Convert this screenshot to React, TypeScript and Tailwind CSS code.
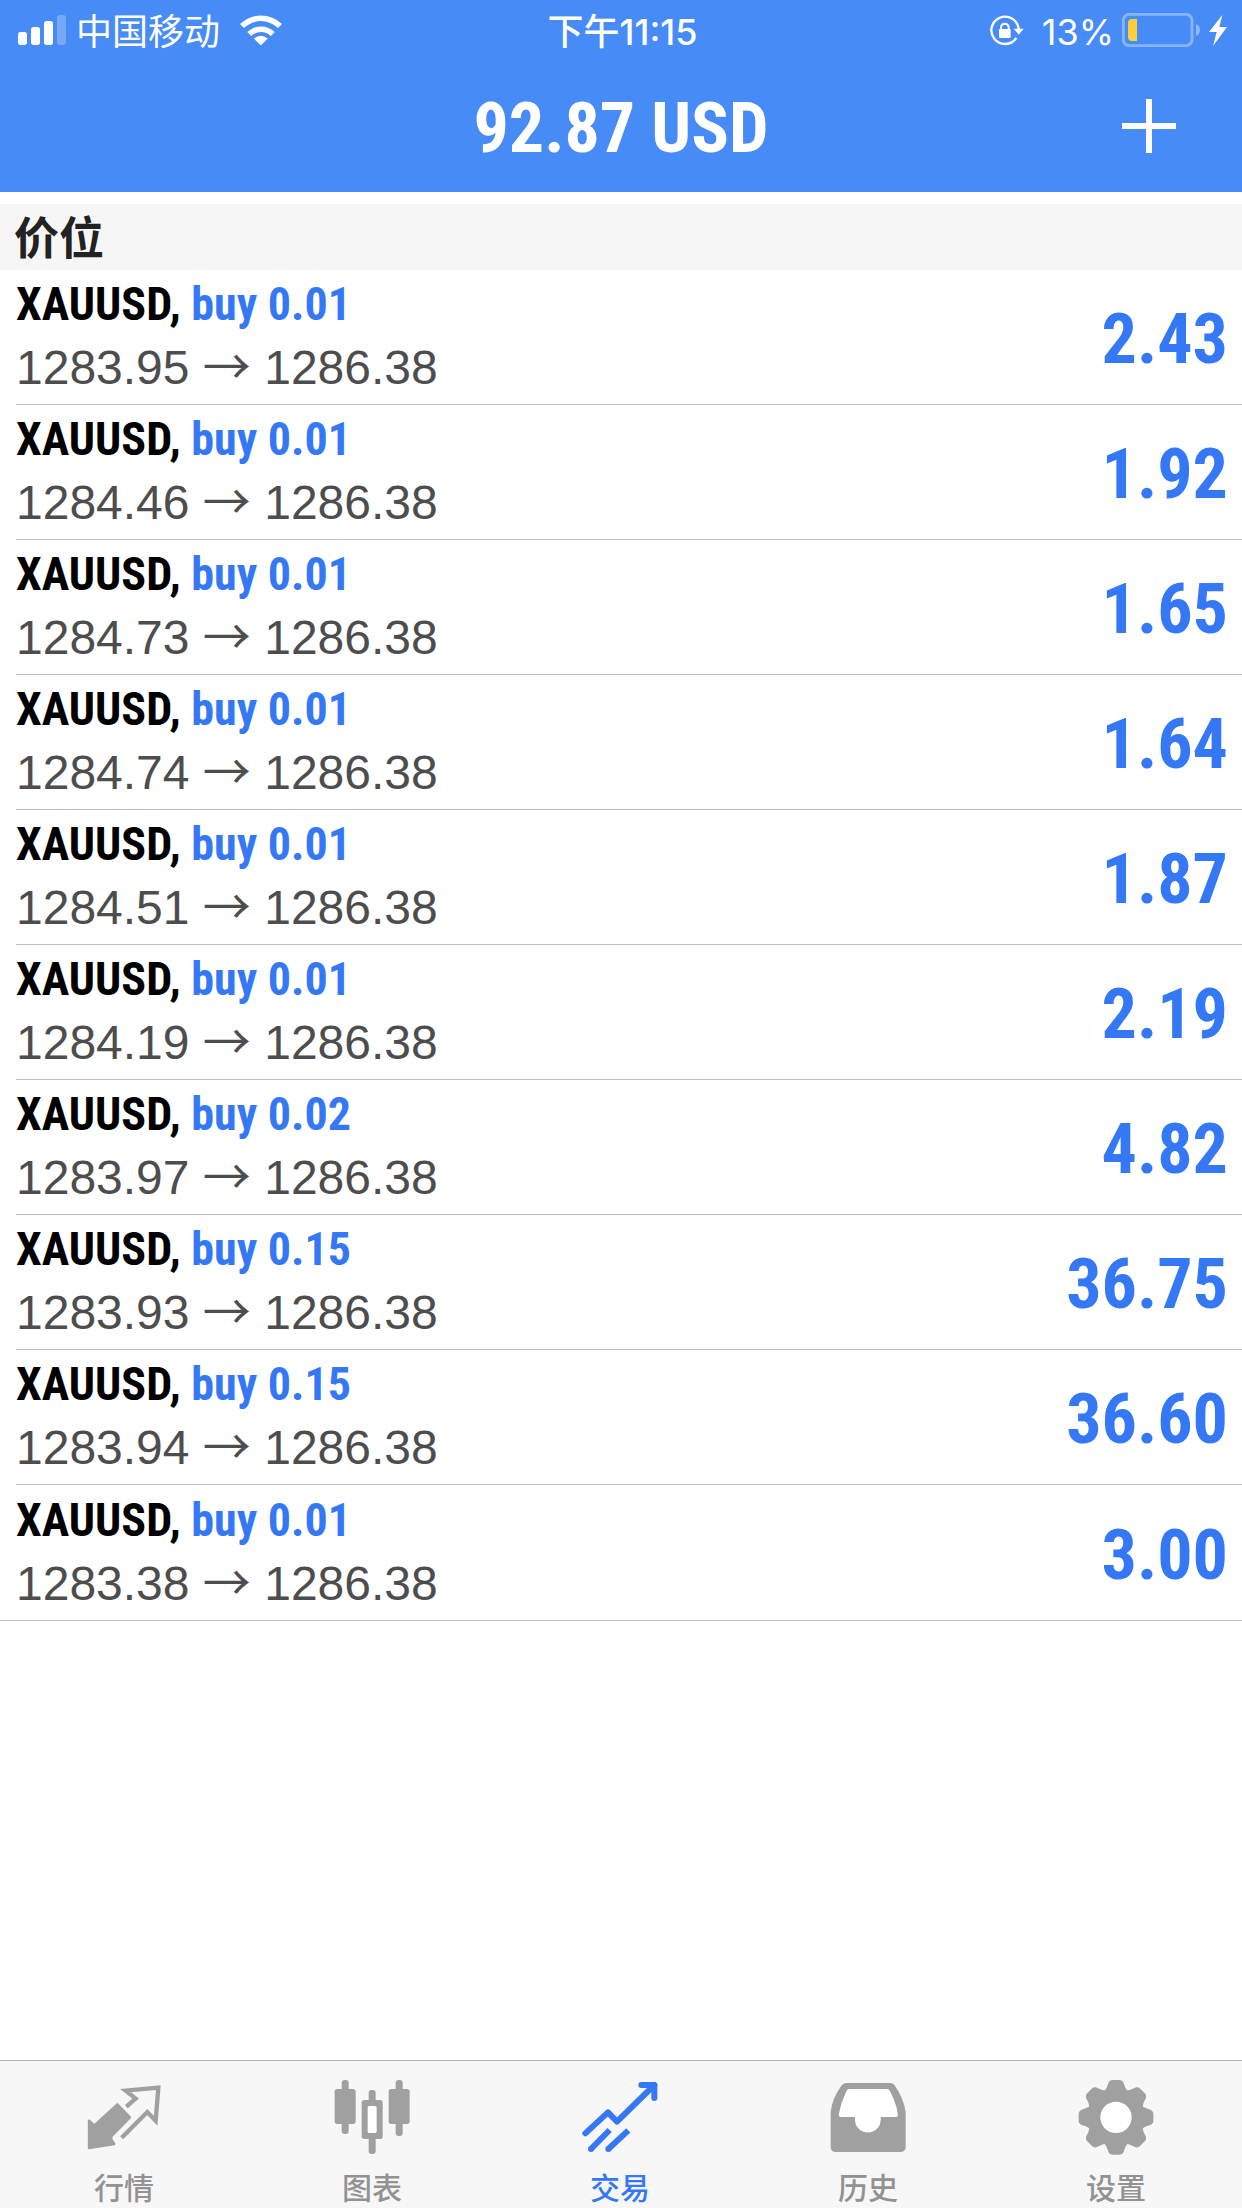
import type { ReactNode } from "react";

type Position = {
    symbol: string;
    side: string;
    volume: string;
    open: string;
    current: string;
    profit: string;
};

const positions: Position[] = [
    { symbol: "XAUUSD", side: "buy", volume: "0.01", open: "1283.95", current: "1286.38", profit: "2.43" },
    { symbol: "XAUUSD", side: "buy", volume: "0.01", open: "1284.46", current: "1286.38", profit: "1.92" },
    { symbol: "XAUUSD", side: "buy", volume: "0.01", open: "1284.73", current: "1286.38", profit: "1.65" },
    { symbol: "XAUUSD", side: "buy", volume: "0.01", open: "1284.74", current: "1286.38", profit: "1.64" },
    { symbol: "XAUUSD", side: "buy", volume: "0.01", open: "1284.51", current: "1286.38", profit: "1.87" },
    { symbol: "XAUUSD", side: "buy", volume: "0.01", open: "1284.19", current: "1286.38", profit: "2.19" },
    { symbol: "XAUUSD", side: "buy", volume: "0.02", open: "1283.97", current: "1286.38", profit: "4.82" },
    { symbol: "XAUUSD", side: "buy", volume: "0.15", open: "1283.93", current: "1286.38", profit: "36.75" },
    { symbol: "XAUUSD", side: "buy", volume: "0.15", open: "1283.94", current: "1286.38", profit: "36.60" },
    { symbol: "XAUUSD", side: "buy", volume: "0.01", open: "1283.38", current: "1286.38", profit: "3.00" },
];

function SignalIcon() {
    return (
        <svg viewBox="0 0 144 90" className="h-[30px] w-12" fill="white" aria-hidden="true">
            <rect x="0" y="51" width="27" height="39" rx="8" />
            <rect x="39" y="36" width="27" height="54" rx="8" />
            <rect x="78" y="18" width="27" height="72" rx="8" />
            <rect x="117" y="0" width="27" height="90" rx="8" opacity="0.25" />
        </svg>
    );
}

function WifiIcon() {
    return (
        <svg viewBox="0 0 127 90" className="h-[30px] w-[42px]" fill="white" aria-hidden="true">
            <path d="M0 27A91 91 0 0 1 127 27L115 39A74 74 0 0 0 12 39Z" />
            <path d="M22 51A60 60 0 0 1 105 51L93 63A43 43 0 0 0 34 63Z" />
            <path d="M42 71Q63 54 84 71L66 89Q63 92 60 89Z" />
        </svg>
    );
}

function RotationLockIcon() {
    return (
        <svg viewBox="0 0 102 96" className="h-8 w-[34px]" fill="none" aria-hidden="true">
            <path d="M79 72A41 41 0 1 1 86 46" stroke="white" strokeWidth="7" />
            <path d="M71 44H101L86 62Z" fill="white" />
            <rect x="27" y="45" width="35" height="27" rx="3" fill="white" />
            <path d="M33 48V38A12 12 0 0 1 56 38V48" stroke="white" strokeWidth="6" />
        </svg>
    );
}

function BatteryIcon() {
    return (
        <svg viewBox="0 0 315 102" className="h-[34px] w-[105px]" fill="none" aria-hidden="true">
            <rect x="4" y="4" width="206" height="94" rx="18" stroke="white" strokeOpacity="0.35" strokeWidth="9" />
            <path d="M222 33Q234 38 234 51Q234 64 222 69Z" fill="white" fillOpacity="0.4" />
            <path d="M30 18H45V84H30Q18 84 18 72V30Q18 18 30 18Z" fill="#fbce3b" />
            <path d="M301 6L261 57H284L273 99L315 42H292Z" fill="white" />
        </svg>
    );
}

function QuotesIcon() {
    return (
        <svg viewBox="0 0 234 234" className="size-[78px]" aria-hidden="true">
            <path
                d="M97 79L135 118L79 175V184L88 198L12 210V128L28 142Z"
                fill="currentColor"
                stroke="currentColor"
                strokeWidth="7"
                strokeLinejoin="round"
            />
            <path
                d="M124 86L152 62L122 38L220 29L212 128L187 102L110 179"
                fill="none"
                stroke="currentColor"
                strokeWidth="13"
            />
        </svg>
    );
}

function ChartIcon() {
    return (
        <svg viewBox="0 0 234 234" className="size-[78px]" fill="currentColor" aria-hidden="true">
            <rect x="26" y="6" width="21" height="162" rx="9" />
            <rect x="5" y="33" width="63" height="105" rx="8" />
            <rect x="107" y="36" width="21" height="192" rx="9" />
            <rect x="86" y="66" width="63" height="117" rx="8" />
            <rect x="104" y="84" width="27" height="81" rx="5" fill="white" />
            <rect x="188" y="6" width="21" height="168" rx="9" />
            <rect x="167" y="33" width="63" height="105" rx="8" />
        </svg>
    );
}

function TradeIcon() {
    return (
        <svg
            viewBox="0 0 234 234"
            className="size-[78px]"
            fill="none"
            stroke="currentColor"
            strokeWidth="18"
            strokeLinejoin="round"
            aria-hidden="true"
        >
            <path d="M13 166L81 103L108 131L220 21" strokeLinecap="round" />
            <path d="M181 21H220V60" strokeLinecap="round" />
            <path d="M30 213L86 156M82 213L142 157" />
            <circle cx="30" cy="213" r="9" fill="currentColor" stroke="none" />
            <circle cx="82" cy="213" r="9" fill="currentColor" stroke="none" />
        </svg>
    );
}

function HistoryIcon() {
    return (
        <svg viewBox="0 0 234 234" className="size-[78px]" aria-hidden="true">
            <path
                d="M52 15H183Q192 15 197 22Q224 62 230 101V206Q230 222 214 222H21Q5 222 5 206V101Q9 62 37 23Q42 15 52 15Z"
                fill="currentColor"
            />
            <path
                d="M60 33H173Q180 33 183 40Q202 76 207 110Q207 117 200 117H155V125A38 38 0 0 1 78 125V117H36Q29 117 29 110Q35 75 52 40Q55 33 60 33Z"
                fill="white"
            />
        </svg>
    );
}

function SettingsIcon() {
    const teeth = [0, 45, 90, 135, 180, 225, 270, 315];
    return (
        <svg viewBox="0 0 234 234" className="size-[78px]" fill="currentColor" aria-hidden="true">
            {teeth.map((angle) => (
                <path
                    key={angle}
                    d="M77 44Q86 38 90 27L94 15Q98 6 107 6H127Q136 6 140 15L144 27Q148 38 157 44L117 119Z"
                    transform={`rotate(${angle} 117 118)`}
                />
            ))}
            <circle cx="117" cy="118" r="82" />
            <circle cx="117" cy="118" r="47" fill="white" />
        </svg>
    );
}

const tabs: { label: string; icon: ReactNode; active?: boolean }[] = [
    { label: "行情", icon: <QuotesIcon /> },
    { label: "图表", icon: <ChartIcon /> },
    { label: "交易", icon: <TradeIcon />, active: true },
    { label: "历史", icon: <HistoryIcon /> },
    { label: "设置", icon: <SettingsIcon /> },
];

function StatusBar() {
    return (
        <div className="grid h-[60px] grid-cols-3 items-center pr-[15px] pl-[18px] font-['Inter','Noto_Sans_CJK_SC',sans-serif] text-[36px] leading-[54px]">
            <div className="flex items-center gap-[10px]">
                <SignalIcon />
                <span className="pt-1">中国移动</span>
                <span className="pl-[10px]">
                    <WifiIcon />
                </span>
            </div>
            <div className="pt-1 text-center font-medium">下午11:15</div>
            <div className="flex items-center justify-end gap-2">
                <span className="pr-[10px]">
                    <RotationLockIcon />
                </span>
                <span className="pt-1">13%</span>
                <BatteryIcon />
            </div>
        </div>
    );
}

function PositionRow({ position }: { position: Position }) {
    return (
        <li className="pl-4 last:border-b last:border-[#bebebe] last:pl-0">
            <div className="flex h-[135px] items-center justify-between border-b border-[#bebebe] pr-[14px] in-[li:last-child]:border-b-0 in-[li:last-child]:pl-4">
                <div className="pb-0.5 leading-[63px]">
                    <div className="font-['Roboto_Condensed',sans-serif] text-[46px] font-bold text-black">
                        {position.symbol},{" "}
                        <span className="text-[#3478f6]">
                            {position.side} {position.volume}
                        </span>
                    </div>
                    <div className="text-[48px] text-[#4d4d4d]">
                        {position.open} <span className="font-['Noto_Sans_CJK_SC',sans-serif] leading-none">→</span>{" "}
                        {position.current}
                    </div>
                </div>
                <div className="pt-1 font-['Roboto_Condensed',sans-serif] text-[70px] leading-[80px] font-bold text-[#3478f6]">
                    {position.profit}
                </div>
            </div>
        </li>
    );
}

export default function App() {
    return (
        <div className="flex min-h-screen flex-col bg-white font-['Liberation_Sans','Noto_Sans_CJK_SC',sans-serif]">
            <header className="bg-[#478bf7] text-white">
                <StatusBar />
                <div className="grid h-[132px] grid-cols-[1fr_auto_1fr] items-center px-[66px]">
                    <h1 className="col-start-2 pt-1 font-['Roboto_Condensed',sans-serif] text-[70px] leading-[80px] font-bold">
                        92.87 USD
                    </h1>
                    <button type="button" aria-label="新订单" className="justify-self-end">
                        <svg viewBox="0 0 54 54" className="size-[54px]" stroke="white" strokeWidth="6">
                            <path d="M27 0V54M0 27H54" />
                        </svg>
                    </button>
                </div>
            </header>

            <main className="flex-1 pt-3">
                <h2 className="h-[66px] bg-[#f6f6f6] px-[14px] font-['Noto_Sans_CJK_SC',sans-serif] text-[45px] leading-[63px] font-bold text-[#222222]">
                    价位
                </h2>
                <ul>
                    {positions.map((position, index) => (
                        <PositionRow key={index} position={position} />
                    ))}
                </ul>
            </main>

            <nav className="grid h-[148px] grid-cols-5 border-t border-[#b2b2b2] bg-[#f7f7f7] pr-0.5 font-['Noto_Sans_CJK_SC',sans-serif]">
                {tabs.map((tab) => (
                    <button
                        key={tab.label}
                        type="button"
                        className={
                            tab.active
                                ? "flex flex-col items-center pt-[17px] text-[#3478f6]"
                                : "flex flex-col items-center pt-[17px] text-[#a0a0a0]"
                        }
                    >
                        {tab.icon}
                        <span
                            className={
                                tab.active
                                    ? "pt-2 text-[30px] leading-[44px] font-medium"
                                    : "pt-2 text-[30px] leading-[44px] font-medium text-[#929292]"
                            }
                        >
                            {tab.label}
                        </span>
                    </button>
                ))}
            </nav>
        </div>
    );
}
